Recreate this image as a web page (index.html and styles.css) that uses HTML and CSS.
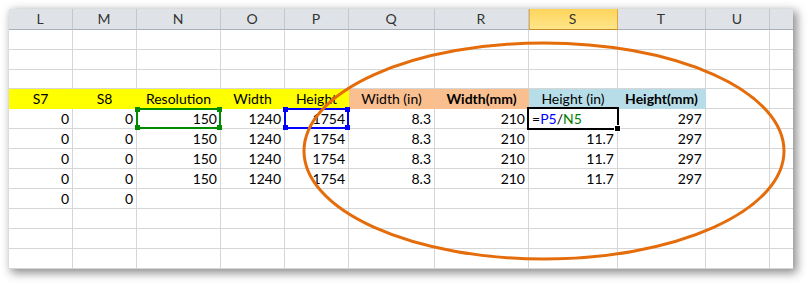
FILE: index.html
```html
<!DOCTYPE html>
<html>
<head>
<meta charset="utf-8">
<link rel="stylesheet" href="styles.css">
</head>
<body>
<div class="page">
  <div class="sheet">
    <div class="c h">L</div><div class="c h">M</div><div class="c h">N</div><div class="c h">O</div><div class="c h">P</div><div class="c h">Q</div><div class="c h">R</div><div class="c h hs">S</div><div class="c h">T</div><div class="c h">U</div><div class="c h last"></div>

    <div class="c"></div><div class="c"></div><div class="c"></div><div class="c"></div><div class="c"></div><div class="c"></div><div class="c"></div><div class="c"></div><div class="c"></div><div class="c"></div><div class="c last"></div>
    <div class="c"></div><div class="c"></div><div class="c"></div><div class="c"></div><div class="c"></div><div class="c"></div><div class="c"></div><div class="c"></div><div class="c"></div><div class="c"></div><div class="c last"></div>
    <div class="c"></div><div class="c"></div><div class="c"></div><div class="c"></div><div class="c"></div><div class="c"></div><div class="c"></div><div class="c"></div><div class="c"></div><div class="c"></div><div class="c last"></div>

    <div class="c ctr y">S7</div><div class="c ctr y">S8</div><div class="c ctr y">Resolution</div><div class="c ctr y">Width</div><div class="c ctr y">Height</div><div class="c ctr o">Width (in)</div><div class="c ctr o bold">Width(mm)</div><div class="c ctr b">Height (in)</div><div class="c ctr b bold">Height(mm)</div><div class="c"></div><div class="c last"></div>

    <div class="c r">0</div><div class="c r">0</div><div class="c r rel">150<span class="sel sel-green"><i class="hd tl"></i><i class="hd tr"></i><i class="hd bl"></i><i class="hd br"></i></span></div><div class="c r">1240</div><div class="c r rel">1754<span class="sel sel-blue"><i class="hd tl"></i><i class="hd tr"></i><i class="hd bl"></i><i class="hd br"></i></span></div><div class="c r">8.3</div><div class="c r">210</div><div class="c rel fx">=<span class="ref-p">P5</span>/<span class="ref-n">N5</span><span class="active"><i class="fill"></i></span></div><div class="c r">297</div><div class="c"></div><div class="c last"></div>
    <div class="c r">0</div><div class="c r">0</div><div class="c r">150</div><div class="c r">1240</div><div class="c r">1754</div><div class="c r">8.3</div><div class="c r">210</div><div class="c r">11.7</div><div class="c r">297</div><div class="c"></div><div class="c last"></div>
    <div class="c r">0</div><div class="c r">0</div><div class="c r">150</div><div class="c r">1240</div><div class="c r">1754</div><div class="c r">8.3</div><div class="c r">210</div><div class="c r">11.7</div><div class="c r">297</div><div class="c"></div><div class="c last"></div>
    <div class="c r">0</div><div class="c r">0</div><div class="c r">150</div><div class="c r">1240</div><div class="c r">1754</div><div class="c r">8.3</div><div class="c r">210</div><div class="c r">11.7</div><div class="c r">297</div><div class="c"></div><div class="c last"></div>
    <div class="c r">0</div><div class="c r">0</div><div class="c"></div><div class="c"></div><div class="c"></div><div class="c"></div><div class="c"></div><div class="c"></div><div class="c"></div><div class="c"></div><div class="c last"></div>

    <div class="c"></div><div class="c"></div><div class="c"></div><div class="c"></div><div class="c"></div><div class="c"></div><div class="c"></div><div class="c"></div><div class="c"></div><div class="c"></div><div class="c last"></div>
    <div class="c"></div><div class="c"></div><div class="c"></div><div class="c"></div><div class="c"></div><div class="c"></div><div class="c"></div><div class="c"></div><div class="c"></div><div class="c"></div><div class="c last"></div>
    <div class="c"></div><div class="c"></div><div class="c"></div><div class="c"></div><div class="c"></div><div class="c"></div><div class="c"></div><div class="c"></div><div class="c"></div><div class="c"></div><div class="c last"></div>
  </div>
  <svg class="ring" width="808" height="285" viewBox="0 0 808 285">
    <ellipse cx="544" cy="151" rx="240" ry="108" fill="none" stroke="#E46C0A" stroke-width="3"/>
  </svg>
</div>
</body>
</html>
```

FILE: styles.css
```css
html, body {
  margin: 0;
  padding: 0;
  background: #ffffff;
}

.page {
  position: relative;
  width: 808px;
  height: 285px;
  padding: 9px 0 0 9px;
  box-sizing: border-box;
}

.sheet {
  display: grid;
  grid-template-columns: 64px 64px 84px 64px 64px 86px 94px 89px 88px 64px 23px;
  grid-template-rows: 21px 20px 20px 19px repeat(9, 20px);
  width: 784px;
  background: #ffffff;
  box-shadow: 3px 3px 9px 1px rgba(0, 0, 0, 0.45);
  font-family: Lato, "Liberation Sans", sans-serif;
  font-size: 14px;
  color: #000000;
}

.c {
  box-sizing: border-box;
  border-right: 1px solid #d6d6d6;
  border-bottom: 1px solid #d6d6d6;
  line-height: 19px;
  padding: 0 3px 0 2px;
  white-space: nowrap;
}

.c.last {
  border-right: none;
}

.h {
  background: #dfe3e8;
  border-right-color: #c3c8ce;
  border-bottom-color: #a9afb6;
  text-align: center;
  line-height: 20px;
  color: #333333;
}

.h.hs {
  background: linear-gradient(#ffd55c, #ffe68a);
  border-right-color: #e0a53e;
  border-bottom-color: #c68b2c;
  box-shadow: inset 1px 0 0 #e5b04a;
}

.r { text-align: right; }
.ctr { text-align: center; padding: 0; }
.bold { font-weight: bold; }

.y { background: #ffff00; border-color: #ffff00; }
.o { background: #fabf8f; border-color: #fabf8f; }
.b { background: #b7dee8; border-color: #b7dee8; }

.rel { position: relative; }

.fx { padding-left: 3px; }
.ref-p { color: #0000ff; }
.ref-n { color: #008000; }

.sel {
  position: absolute;
  left: -1px;
  top: -1px;
  width: 85px;
  height: 21px;
  box-sizing: border-box;
  border: 2px solid #008000;
  z-index: 2;
}

.sel-green { border-color: #008a00; }
.sel-blue { border-color: #0000ff; width: 65px; }

.hd {
  position: absolute;
  width: 5px;
  height: 5px;
}
.sel-green .hd { background: #008a00; }
.sel-blue .hd { background: #0000ff; }
.hd.tl { left: -3px; top: -3px; }
.hd.tr { right: -3px; top: -3px; }
.hd.bl { left: -3px; bottom: -3px; }
.hd.br { right: -3px; bottom: -3px; }

.active {
  position: absolute;
  left: -2px;
  top: -2px;
  width: 92px;
  height: 23px;
  box-sizing: border-box;
  border: 2px solid #000000;
  z-index: 3;
}

.fill {
  position: absolute;
  right: -4px;
  bottom: -4px;
  width: 5px;
  height: 5px;
  background: #000000;
  border: 1px solid #ffffff;
}

.ring {
  position: absolute;
  left: 0;
  top: 0;
  z-index: 5;
  pointer-events: none;
}
```
